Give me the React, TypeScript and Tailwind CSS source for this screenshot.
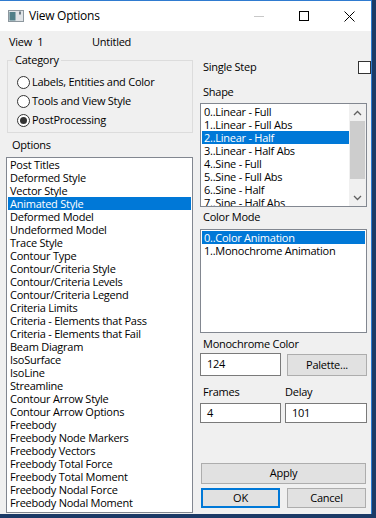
import React from 'react';

const OPTIONS = [
  'Post Titles', 'Deformed Style', 'Vector Style', 'Animated Style', 'Deformed Model',
  'Undeformed Model', 'Trace Style', 'Contour Type', 'Contour/Criteria Style',
  'Contour/Criteria Levels', 'Contour/Criteria Legend', 'Criteria Limits',
  'Criteria - Elements that Pass', 'Criteria - Elements that Fail', 'Beam Diagram',
  'IsoSurface', 'IsoLine', 'Streamline', 'Contour Arrow Style', 'Contour Arrow Options',
  'Freebody', 'Freebody Node Markers', 'Freebody Vectors', 'Freebody Total Force',
  'Freebody Total Moment', 'Freebody Nodal Force', 'Freebody Nodal Moment',
];

const SHAPES = [
  '0..Linear - Full', '1..Linear - Full Abs', '2..Linear - Half', '3..Linear - Half Abs',
  '4..Sine - Full', '5..Sine - Full Abs', '6..Sine - Half', '7..Sine - Half Abs',
];

const MODES = ['0..Color Animation', '1..Monochrome Animation'];

const Item = ({ text, selected }: { text: string; selected?: boolean }) => (
  <div className={`h-[13px] leading-[13px] pl-[2px] whitespace-nowrap shrink-0 ${selected ? 'bg-[#0078d7] text-white' : ''}`}>
    {text}
  </div>
);

const Radio = ({ label, checked }: { label: string; checked?: boolean }) => (
  <div className="h-[19px] flex items-center gap-[2px]">
    <div className="w-[13px] h-[13px] rounded-full border border-[#333] bg-white flex items-center justify-center">
      {checked && <div className="w-[7px] h-[7px] rounded-full bg-[#333]" />}
    </div>
    <span>{label}</span>
  </div>
);

const Btn = ({ label, cls }: { label: string; cls: string }) => (
  <div className={`flex items-center justify-center bg-[#e1e1e1] ${cls}`}>{label}</div>
);

export default function App() {
  return (
    <div className="w-[376px] h-[518px] bg-[#1b3a66] overflow-hidden font-['Open_Sans',sans-serif] text-[11px] tracking-[-0.25px] text-black">
      <div className="w-[372px] h-[514px] flex flex-col bg-[#f0f0f0] border-t border-r border-[#2f7bd0]">
        {/* title bar */}
        <div className="h-[30px] bg-white flex items-center shrink-0">
          <svg width="16" height="12" viewBox="0 0 16 12" className="ml-[8px]">
            <rect x="0.5" y="0.5" width="15" height="11" fill="#dfe3e6" stroke="#8d979e" />
            <rect x="1.5" y="2" width="6" height="8.5" fill="#4f7f88" />
            <rect x="11" y="1.5" width="2" height="3" fill="#6d7a82" />
          </svg>
          <span className="ml-[5px] text-[12px]">View Options</span>
          <div className="ml-auto flex h-full">
            <div className="w-[45px] flex items-center justify-center">
              <div className="w-[10px] h-[1px] bg-[#c8c8c8]" />
            </div>
            <div className="w-[45px] flex items-center justify-center">
              <div className="w-[10px] h-[10px] border border-black" />
            </div>
            <div className="w-[45px] flex items-center justify-center pl-[2px]">
              <svg width="11" height="11" viewBox="0 0 11 11">
                <path d="M0.5 0.5 L10.5 10.5 M10.5 0.5 L0.5 10.5" stroke="#000" strokeWidth="1" />
              </svg>
            </div>
          </div>
        </div>

        {/* body */}
        <div className="flex-1 flex flex-col pl-[6px]">
          <div className="mt-[3px] h-[16px] leading-[16px] flex pl-[3px]">
            <span className="w-[83px]">View&nbsp;&nbsp;1</span>
            <span>Untitled</span>
          </div>

          <div className="flex gap-[7px]">
            {/* left column */}
            <div className="w-[187px] flex flex-col">
              <fieldset className="ml-[1px] mt-[2px] w-[186px] border border-[#dcdcdc]">
                <legend className="ml-[5px] px-[2px] leading-[16px]">Category</legend>
                <div className="pt-[5px] pl-[9px] pb-[2px]">
                  <Radio label="Labels, Entities and Color" />
                  <Radio label="Tools and View Style" />
                  <Radio label="PostProcessing" checked />
                </div>
              </fieldset>
              <div className="mt-[4px] h-[16px] leading-[16px] pl-[6px]">Options</div>
              <div className="mt-[4px] h-[356px] border border-[#828790] bg-white px-[1px] flex flex-col overflow-hidden">
                {OPTIONS.map((o) => (
                  <Item key={o} text={o} selected={o === 'Animated Style'} />
                ))}
              </div>
            </div>

            {/* right column */}
            <div className="w-[167px] flex flex-col">
              <div className="mt-[9px] h-[16px] flex items-center justify-between pl-[3px]">
                <span>Single Step</span>
                <div className="w-[13px] h-[13px] border border-[#333] bg-white -mr-[4px]" />
              </div>
              <div className="mt-[9px] h-[16px] leading-[16px] pl-[3px]">Shape</div>
              <div className="mt-[3px] h-[104px] border border-[#828790] bg-white flex overflow-hidden">
                <div className="flex-1 flex flex-col pt-[1px] pl-[1px] overflow-hidden">
                  {SHAPES.map((s) => (
                    <Item key={s} text={s} selected={s === '2..Linear - Half'} />
                  ))}
                </div>
                <div className="w-[17px] bg-[#f0f0f0] flex flex-col">
                  <div className="h-[17px] flex items-center justify-center">
                    <svg width="9" height="6" viewBox="0 0 9 6">
                      <path d="M1 5 L4.5 1.5 L8 5" fill="none" stroke="#606060" strokeWidth="1.3" />
                    </svg>
                  </div>
                  <div className="h-[58px] mx-[1px] bg-[#cdcdcd]" />
                  <div className="flex-1" />
                  <div className="h-[17px] flex items-center justify-center">
                    <svg width="9" height="6" viewBox="0 0 9 6">
                      <path d="M1 1 L4.5 4.5 L8 1" fill="none" stroke="#606060" strokeWidth="1.3" />
                    </svg>
                  </div>
                </div>
              </div>
              <div className="mt-[2px] h-[16px] leading-[16px] pl-[3px]">Color Mode</div>
              <div className="mt-[4px] h-[104px] border border-[#828790] bg-white pt-[1px] px-[1px] flex flex-col">
                {MODES.map((m) => (
                  <Item key={m} text={m} selected={m === '0..Color Animation'} />
                ))}
              </div>
              <div className="mt-[3px] h-[16px] leading-[16px] pl-[3px]">Monochrome Color</div>
              <div className="mt-[1px] flex justify-between items-start">
                <div className="w-[81px] h-[23px] border border-[#7a7a7a] bg-white pl-[6px] flex items-center">124</div>
                <Btn label="Palette..." cls="w-[80px] h-[22px] mt-[1px] border border-[#adadad]" />
              </div>
              <div className="mt-[8px] h-[16px] leading-[16px] flex">
                <span className="w-[85px] pl-[3px]">Frames</span>
                <span>Delay</span>
              </div>
              <div className="mt-[3px] flex gap-[4px]">
                <div className="w-[81px] h-[20px] border border-[#7a7a7a] bg-white pl-[6px] flex items-center">4</div>
                <div className="w-[82px] h-[20px] border border-[#7a7a7a] bg-white pl-[6px] flex items-center">101</div>
              </div>
              <Btn label="Apply" cls="mt-[40px] ml-[1px] w-[165px] h-[21px] border border-[#adadad]" />
              <div className="mt-[4px] ml-[1px] flex justify-between w-[165px]">
                <Btn label="OK" cls="w-[79px] h-[20px] border-2 border-[#0078d7]" />
                <Btn label="Cancel" cls="w-[79px] h-[20px] border border-[#adadad]" />
              </div>
            </div>
          </div>
        </div>
      </div>
    </div>
  );
}
